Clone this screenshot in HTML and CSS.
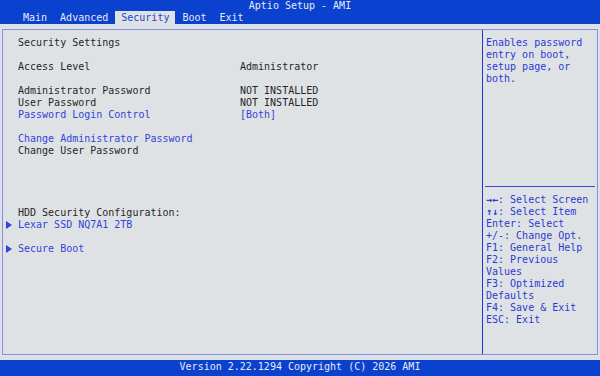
FILE: index.html
```html
<!DOCTYPE html>
<html lang="en">
<head>
    <meta charset="UTF-8">
    <meta name="viewport" content="width=device-width, initial-scale=1.0">
    <title>Aptio Setup - AMI</title>
    <link rel="stylesheet" href="styles.css">
</head>
<body>
    <div class="header">
        <div class="title">Aptio Setup - AMI</div>
        <div class="tabs">
            <span class="tab">Main</span>
            <span class="tab">Advanced</span>
            <span class="tab active">Security</span>
            <span class="tab">Boot</span>
            <span class="tab">Exit</span>
        </div>
    </div>

    <div class="main">
        <div class="frame">
            <div class="settings">
                <div class="row">Security Settings</div>
                <div class="gap"></div>
                <div class="row"><span class="label">Access Level</span><span>Administrator</span></div>
                <div class="gap"></div>
                <div class="row"><span class="label">Administrator Password</span><span>NOT INSTALLED</span></div>
                <div class="row"><span class="label">User Password</span><span>NOT INSTALLED</span></div>
                <div class="row link"><span class="label">Password Login Control</span><span>[Both]</span></div>
                <div class="gap"></div>
                <div class="row link">Change Administrator Password</div>
                <div class="row">Change User Password</div>
                <div class="spacer"></div>
                <div class="row">HDD Security Configuration:</div>
                <div class="row link submenu">Lexar SSD NQ7A1 2TB</div>
                <div class="gap"></div>
                <div class="row link submenu">Secure Boot</div>
            </div>

            <div class="help">
                <div class="help-text">Enables password entry on boot, setup page, or both.</div>
                <div class="keys">
                    <div><span class="arrows">→←</span>: Select Screen</div>
                    <div><span class="arrows">↑↓</span>: Select Item</div>
                    <div>Enter: Select</div>
                    <div>+/-: Change Opt.</div>
                    <div>F1: General Help</div>
                    <div>F2: Previous Values</div>
                    <div>F3: Optimized Defaults</div>
                    <div>F4: Save &amp; Exit</div>
                    <div>ESC: Exit</div>
                </div>
            </div>
        </div>
    </div>

    <div class="footer">Version 2.22.1294 Copyright (C) 2026 AMI</div>
</body>
</html>
```

FILE: styles.css
```css
:root {
    --bios-blue: #0b41cf;
    --panel-gray: #dfe2e5;
    --text-dark: #262626;
    --text-blue: #3342d8;
}

* {
    box-sizing: border-box;
}

body {
    margin: 0;
    width: 600px;
    height: 376px;
    display: flex;
    flex-direction: column;
    font-family: "DejaVu Sans Mono", "Liberation Mono", monospace;
    font-size: 10px;
    line-height: 12px;
    background: var(--panel-gray);
    color: var(--text-dark);
    overflow: hidden;
}

.header {
    background: var(--bios-blue);
    color: #e8ebf2;
    height: 24px;
}

.title {
    text-align: center;
    height: 11px;
    line-height: 12px;
}

.tabs {
    display: flex;
    padding-left: 17px;
    height: 13px;
}

.tab {
    padding: 0 6px;
    line-height: 14px;
    margin-right: 1px;
}

.tab.active {
    background: var(--panel-gray);
    color: #1f44cf;
}

.main {
    flex: 1;
    padding: 5px 2px 5px 2px;
}

.frame {
    height: 100%;
    display: flex;
    border: 1px solid #8291e6;
}

.settings {
    flex: 1;
    display: flex;
    flex-direction: column;
    padding: 7px 0 0 15px;
    border-right: 1px solid #2135d6;
}

.row {
    display: flex;
    align-items: center;
    height: 12px;
    white-space: nowrap;
}

.label {
    width: 222px;
}

.gap {
    height: 12px;
}

.spacer {
    height: 50px;
}

.link {
    color: var(--text-blue);
}

.submenu::before {
    content: "";
    width: 0;
    height: 0;
    margin-left: -12px;
    margin-right: 6px;
    border-left: 6px solid #3342d8;
    border-top: 4px solid transparent;
    border-bottom: 4px solid transparent;
}

.help {
    width: 114px;
    display: flex;
    flex-direction: column;
    color: #2b3bd2;
}

.help-text {
    flex: 1;
    padding: 7px 3px 0 3px;
}

.keys {
    margin: 0 2px;
    border-top: 1px solid #3a4cd8;
    padding: 7px 1px 28px 1px;
}

.arrows {
    font-weight: bold;
}

.footer {
    background: var(--bios-blue);
    color: #e8ebf2;
    height: 16px;
    line-height: 14px;
    text-align: center;
}
```
